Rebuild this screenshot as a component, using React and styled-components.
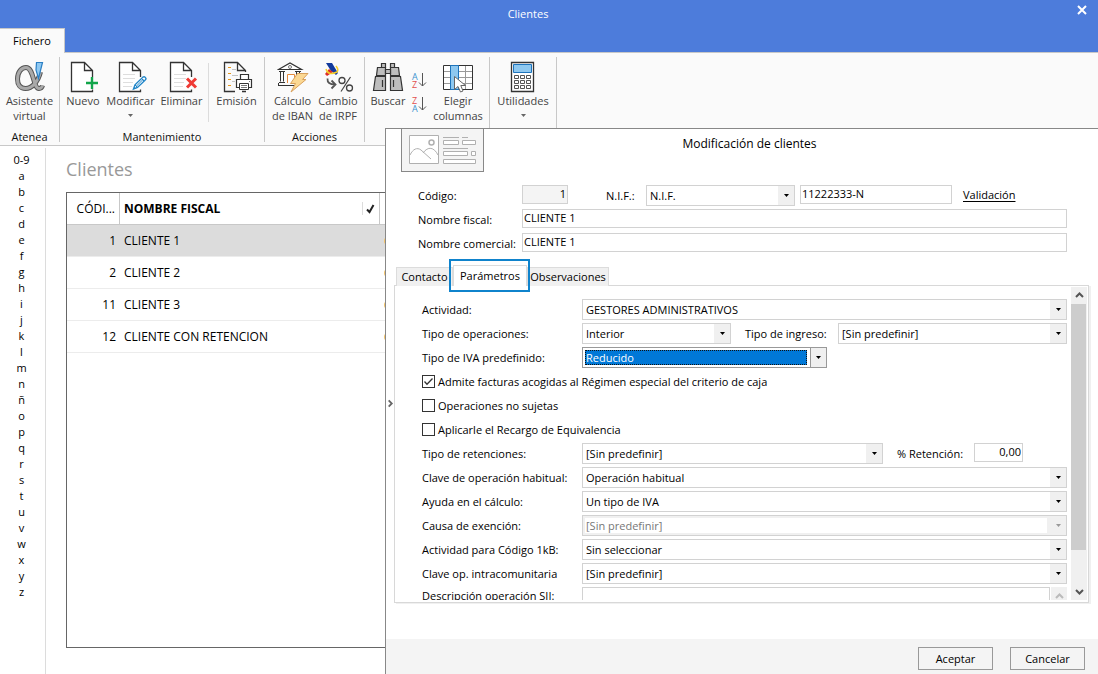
import React, { useState } from "react";
import styled, { createGlobalStyle, css } from "styled-components";

const FONT = '"Open Sans", "Noto Sans", sans-serif';
const LINE = "#c8c8c8";
const FIELD = "#d2d2d2";
const INK = "#333";

const GlobalStyle = createGlobalStyle`
    *, *::before, *::after { box-sizing: border-box; }
    body {
        margin: 0;
        background: #fff;
        color: #000;
        font-family: ${FONT};
        font-size: 11px;
    }
    button, input, select, textarea {
        margin: 0;
        font: inherit;
        color: inherit;
    }
`;

const Window = styled.div`
    position: relative;
    display: flex;
    flex-direction: column;
    height: 100vh;
    overflow: hidden;
`;

const TitleBar = styled.header`
    display: flex;
    flex-direction: column;
    justify-content: space-between;
    height: 52px;
    background: #4d7cdb;
`;

const TitleRow = styled.div`
    display: flex;
    gap: 10px;
    height: 28px;
    color: #fff;
`;

const AppTitle = styled.div`
    flex: 1;
    line-height: 28px;
    text-align: center;
`;

const CloseButton = styled.button`
    display: flex;
    align-items: center;
    justify-content: center;
    width: 32px;
    height: 20px;
    padding: 0;
    border: 0;
    background: none;
`;

const FileTab = styled.button`
    width: 65px;
    height: 25px;
    margin-bottom: -1px;
    padding: 0 0 2px;
    border: solid ${LINE};
    border-width: 1px 1px 0 0;
    background: #fafafa;
    z-index: 1;
`;

const Ribbon = styled.div`
    display: flex;
    height: 94px;
    padding: 4px 0 3px;
    border-top: 1px solid ${LINE};
    border-bottom: 1px solid ${LINE};
    background: #fafafa;
`;

const Group = styled.section`
    display: flex;
    flex-direction: column;
    width: ${({ $width }) => $width}px;
    padding-top: 4px;
    border-right: 1px solid ${LINE};
`;

const GroupTools = styled.div`
    flex: 1;
    display: grid;
    grid-template-columns: ${({ $cols }) => $cols};
    justify-content: center;
`;

const GroupName = styled.h2`
    margin: 0;
    font-size: 11px;
    font-weight: 400;
    line-height: 10px;
    text-align: center;
    color: #111;
`;

const ToolButton = styled.button`
    display: flex;
    flex-direction: column;
    align-items: center;
    padding: 0;
    border: 0;
    background: none;
    line-height: 15px;
    white-space: pre;
    text-align: center;
    color: #444;
`;

const ToolDivider = styled.div`
    height: 59px;
    margin-top: 2px;
    background: #dcdcdc;
`;

const SortStack = styled.div`
    display: flex;
    flex-direction: column;
    gap: 5px;
    padding-top: 10px;
`;

const SortButton = styled.button`
    display: flex;
    padding: 0;
    border: 0;
    background: none;
`;

const Caret = styled.svg`
    margin-top: 6px;
`;

const Body = styled.main`
    flex: 1;
    display: flex;
    min-height: 0;
    padding-top: 2px;
`;

const Alphabet = styled.nav`
    display: flex;
    flex-direction: column;
    width: 46px;
    padding-top: 4px;
    border-right: 1px solid #dcdcdc;
`;

const Letter = styled.button`
    height: 16px;
    padding: 0 2px 0 0;
    border: 0;
    background: none;
    line-height: 16px;
`;

const Listing = styled.section`
    flex: 1;
    display: flex;
    flex-direction: column;
    padding: 8px 20px 26px;
`;

const ListingTitle = styled.h1`
    margin: 0 0 10px;
    font-size: 18px;
    font-weight: 400;
    line-height: 26px;
    color: #999;
`;

const TableFrame = styled.div`
    flex: 1;
    border: 1px solid #666;
`;

const Table = styled.table`
    width: 100%;
    border-collapse: separate;
    border-spacing: 0;
    table-layout: fixed;
    font-size: 12px;

    th, td {
        height: 32px;
        padding: 0 4px;
        text-align: left;
        white-space: nowrap;
        border-bottom: 1px solid #ececec;
    }
    th {
        border-bottom-color: ${LINE};
        border-right: 1px solid ${LINE};
    }
    th:first-child {
        font-weight: 400;
        text-align: right;
    }
    td:first-child {
        text-align: right;
    }
`;

const Row = styled.tr`
    background: ${({ $selected }) => ($selected ? "#dcdcdc" : "#fff")};
`;

const HeadCell = styled.div`
    display: flex;
    align-items: center;
    justify-content: space-between;
`;

const CheckMark = styled.span`
    display: flex;
    padding-left: 3px;
    border-left: 1px solid #dcdcdc;
`;

const Panel = styled.section`
    position: absolute;
    top: 128px;
    left: 385px;
    right: 0;
    bottom: 0;
    display: grid;
    grid-template-columns: 8px minmax(0, 1fr);
    grid-template-rows: minmax(0, 1fr) 35px;
    border: solid #888;
    border-width: 1px 0 0 1px;
    background: #fff;
`;

const Expander = styled.button`
    grid-area: 1 / 1 / 3 / 2;
    display: flex;
    align-items: center;
    justify-content: center;
    padding: 4px 0 0;
    border: 0;
    background: none;
    z-index: 1;
`;

const PanelMain = styled.div`
    grid-area: 1 / 2 / 2 / 3;
    display: flex;
    flex-direction: column;
    min-height: 0;
`;

const PanelHead = styled.div`
    display: grid;
    grid-template-columns: 1fr auto 1fr;
    align-items: start;
    padding-left: 7px;
`;

const CardTile = styled.div`
    width: 83px;
    height: 43px;
    border: 1px solid #888;
    border-top: 0;
    background: #f4f4f4;
`;

const PanelTitle = styled.h2`
    margin: 0;
    font-size: 12px;
    font-weight: 400;
    line-height: 30px;
`;

const Identity = styled.div`
    display: flex;
    flex-direction: column;
    gap: 3px;
    padding: 13px 31px 0 24px;
`;

const Line = styled.div`
    display: flex;
    flex: none;
    align-items: flex-start;
    height: 21px;
`;

const Label = styled.label`
    flex: none;
    width: ${({ $width }) => $width}px;
    padding-left: ${({ $indent = 0 }) => $indent}px;
    line-height: ${({ $line = 22 }) => $line}px;
    white-space: nowrap;
`;

const TextBox = styled.input`
    flex: ${({ $width }) => ($width ? "none" : "1")};
    width: ${({ $width }) => ($width ? `${$width}px` : "auto")};
    min-width: 0;
    height: 19px;
    padding: 0 1px 2px;
    border: 1px solid ${FIELD};
    border-radius: 0;
    background: ${({ readOnly }) => (readOnly ? "#f4f4f4" : "#fff")};
    text-align: ${({ $align }) => $align || "left"};
    outline: 0;
`;

const NumberBox = styled(TextBox)`
    margin-left: 5px;
`;

const CheckLink = styled.a`
    margin-left: 11px;
    color: #000;
    line-height: 20px;
    text-underline-offset: 2px;
`;

const Tabs = styled.div`
    display: flex;
    align-items: flex-end;
    height: 21px;
    margin: 11px 0 0 2px;
`;

const Tab = styled.button`
    position: relative;
    height: ${({ $active }) => ($active ? 21 : 19)}px;
    width: ${({ $width }) => $width}px;
    padding: 0 0 2px;
    border: 1px solid #dcdcdc;
    border-bottom: 0;
    background: ${({ $active }) => ($active ? "#fff" : "#f0f0f0")};
    white-space: nowrap;
    z-index: ${({ $active }) => ($active ? 1 : 0)};

    ${({ $active }) => $active && css`
        &::after {
            content: "";
            position: absolute;
            inset: -7px -4px -6px -5px;
            border: 2px solid #0f83cc;
        }
    `}
`;

const TabPanel = styled.div`
    flex: 1;
    display: flex;
    min-height: 0;
    margin: -1px 9px 36px 0;
    padding: 1px 1px 2px 0;
    border: 1px solid #d8d8d8;
    box-shadow: 2px 1px 0 #f0f0f0;
`;

const Fields = styled.form`
    flex: 1;
    display: flex;
    flex-direction: column;
    gap: 3px;
    min-width: 0;
    overflow: hidden;
    padding: 12px 4px 0 27px;
`;

const SelectBox = styled.span`
    display: grid;
    flex: ${({ $width }) => ($width ? "none" : "1")};
    width: ${({ $width }) => ($width ? `${$width}px` : "auto")};
    min-width: 0;
    height: 21px;
    border: 1px solid ${({ $focus }) => ($focus ? "#999" : FIELD)};
    background: ${({ $disabled }) => ($disabled ? "#f0f0f0" : "#fff")};

    > * { grid-area: 1 / 1; }

    select {
        appearance: none;
        min-width: 0;
        padding: 0 0 0 3px;
        border: 0;
        border-radius: 0;
        background: none;
        outline: 0;
        opacity: 1;
    }
    ${({ $disabled }) => $disabled && css`
        select {
            height: 15px;
            margin: 2px 19px 2px 2px;
            padding-left: 1px;
            background: #fff;
            color: #777;
        }
    `}
    ${({ $focus }) => $focus && css`
        select {
            height: 15px;
            margin: 2px 19px 2px 2px;
            padding-left: 0;
            border: 1px dotted #111;
            background: #0078d7;
            color: #fff;
            line-height: 13px;
        }
    `}
`;

const DropMark = styled.span`
    justify-self: end;
    display: flex;
    align-items: center;
    justify-content: center;
    width: 16px;
    background: #f0f0f0;
    pointer-events: none;
    ${({ $focus }) => $focus && "border-left: 1px solid #999;"}
`;

const CheckRow = styled.label`
    display: flex;
    flex: none;
    align-items: center;
    gap: 3px;
    height: 21px;
`;

const Tick = styled.input`
    appearance: none;
    width: 13px;
    height: 13px;
    border: 1px solid ${INK};
    background: #fff;
    &:checked {
        background: #fff url("data:image/svg+xml,%3Csvg xmlns='http://www.w3.org/2000/svg' viewBox='0 0 11 11'%3E%3Cpath d='M1.5 5.5 4 8.2 9.5 2.5' fill='none' stroke='%23333' stroke-width='1.3'/%3E%3C/svg%3E");
    }
`;

const Notes = styled.textarea`
    flex: 1;
    height: 40px;
    margin-right: 1px;
    padding: 0 2px;
    border: 1px solid ${FIELD};
    border-radius: 0;
    resize: none;
    overflow: hidden;
    outline: 0;
`;

const NotesScroll = styled.span`
    display: flex;
    justify-content: center;
    width: 16px;
    height: 40px;
    padding-top: 5px;
    background: #f0f0f0;
`;

const ScrollBar = styled.div`
    display: flex;
    flex-direction: column;
    width: 16px;
    background: #f0f0f0;
`;

const ScrollArrow = styled.button`
    display: flex;
    align-items: center;
    justify-content: center;
    height: 17px;
    padding: 0;
    border: 0;
    background: none;
`;

const ScrollTrack = styled.div`
    flex: 1;
`;

const ScrollThumb = styled.div`
    width: 15px;
    height: 88%;
    background: #cdcdcd;
`;

const PanelFoot = styled.footer`
    grid-area: 2 / 1 / 3 / 3;
    display: flex;
    justify-content: flex-end;
    gap: 17px;
    padding: 8px 13px 4px;
    background: #f4f4f4;
`;

const FootButton = styled.button`
    width: 75px;
    padding: 0;
    border: 1px solid #999;
    background: #f4f4f4;
`;

const Icon = ({ children, width = 32, height = 32 }) => (
    <svg width={width} height={height} viewBox={`0 0 ${width} ${height}`} fill="none" aria-hidden="true">
        {children}
    </svg>
);

const Page = () => (
    <>
        <path d="M4.5 30.5V1.5H17.5L25.5 9.5V30.5Z" fill="#fff" />
        <path d="M25.5 28.5V30.5H4.5V1.5H17.5L25.5 9.5V16M17.5 1.5V9.5H25.5" stroke={INK} strokeWidth="1.3" />
    </>
);

const PageLines = () => <path d="M8 13.5H20M8 17.5H20M8 21.5H18M8 25.5H17" stroke="#dedede" />;

const ALPHA = "M26.500 11C24 21 18 27.500 11.500 27.500C6 27.500 3.500 23.500 3.500 18C3.500 11 7.500 6.500 12 6.500C20 6.500 19 27.500 25 27.500C27 27.500 28 26.500 28.500 24.500";

const AlphaIcon = () => (
    <Icon>
        <path d={ALPHA} stroke="#555" strokeWidth="5" />
        <path d={ALPHA} stroke="#a9a9a9" strokeWidth="3" />
        <path d="M22.500 1.500H28.500L24.500 17.500L22 9Z" fill="#8fc9f2" stroke="#2b7fc4" strokeWidth="1.200" />
    </Icon>
);

const NewIcon = () => (
    <Icon>
        <Page />
        <path d="M25 16V28M19 22H31" stroke="#12a54a" strokeWidth="2.400" />
    </Icon>
);

const EditIcon = () => (
    <Icon>
        <Page />
        <PageLines />
        <path d="M18.500 28L20 23.800L27.800 16.200Q29.800 15 31 17.500Q31 18.500 30 19.200L22.500 26.500Z" fill="#fff" stroke="#2286c8" strokeWidth="1.400" />
        <path d="M20 24L22.500 26.500M26.500 17.500L29 20M21.500 25L28.500 18" stroke="#2286c8" />
    </Icon>
);

const DeleteIcon = () => (
    <Icon>
        <Page />
        <PageLines />
        <path d="M21 17.500L30 26.500M30 17.500L21 26.500" stroke="#ef3a34" strokeWidth="3" />
    </Icon>
);

const PrintIcon = () => (
    <Icon>
        <path d="M14 30.500H3.500V1.500H16.500L24.500 9.500V11M16.500 1.500V9.500H24.500M21 30.500H25" stroke={INK} strokeWidth="1.300" />
        <path d="M7 6.500H10M7 12.500H10M7 18.500H10M7 24.500H10" stroke="#e8991c" />
        <path d="M11 8.500H15M11 14.500H17M11 20.500H14" stroke="#c4c4c4" />
        <path d="M19.500 18.500V13.500H27.500V18.500M18 26.500H15.500V18.500H30.500V26.500H28" fill="#fff" stroke={INK} strokeWidth="1.200" />
        <path d="M18.500 22.500H27.500V28.500H18.500Z" fill="#fff" stroke={INK} />
        <path d="M20 24.500H26M20 26.500H26M28 20.500H29" stroke="#777" />
    </Icon>
);

const BankIcon = () => (
    <Icon>
        <path d="M1.500 8.500L13 2L24.500 8.500Z" fill="#fff" stroke={INK} strokeWidth="1.200" />
        <circle cx="13" cy="6" r="1.500" stroke="#777" />
        <path d="M2 10.500H8M3.500 10.500V20.500M6.500 10.500V20.500M18 10.500H24M19.500 10.500V14M22.500 10.500V13M2 21.500H8M1 24.500H18M1.500 22V24" stroke={INK} />
        <path d="M10.500 22V13.500H17.500V22" fill="#fff" stroke="#e58a3c" />
        <path d="M20.500 12.500H31L25.500 18.500H29L14 31L18.500 22.500H13.500Z" fill="#fbd893" stroke="#d9a15c" />
    </Icon>
);

const TaxIcon = () => (
    <Icon>
        <path d="M4 2H10L16 12L14 14L9 10Z" fill="#123a9c" />
        <path d="M7 8L11 11L5 15L3 13Z" fill="#dd2a2a" />
        <path d="M4 8Q6 15 15 11Q17 9 14 5" stroke="#f7cf2a" strokeWidth="1.500" />
        <path d="M5.500 17.500Q5 23.500 13 23.500M9.500 19.500L13.500 23.500L9.500 27.500" stroke="#555" strokeWidth="1.800" />
        <path d="M28.500 16L19 30.500" stroke="#444" strokeWidth="1.200" />
        <circle cx="20" cy="19.500" r="3" stroke="#444" strokeWidth="1.300" />
        <circle cx="27.500" cy="27" r="3" stroke="#444" strokeWidth="1.300" />
    </Icon>
);

const SearchIcon = () => (
    <Icon>
        <g fill="#bdbdbd" stroke={INK} strokeWidth="1.200">
            <path d="M9.500 2.500H13.500V6.500H9.500ZM18.500 2.500H22.500V6.500H18.500Z" />
            <path d="M5.500 6.500H13.500V14.500H4.500ZM18.500 6.500H26.500L27.500 14.500H18.500Z" />
            <path d="M13.500 8.500H18.500V12.500H13.500Z" />
            <path d="M3.500 15.500H13.500V29.500H1.500ZM18.500 15.500H28.500L30.500 29.500H18.500Z" />
            <path d="M10.500 19V26M21.500 19V26" />
        </g>
    </Icon>
);

const ColumnsIcon = () => (
    <Icon>
        <path d="M1.500 4.500H30.500V28.500H1.500Z" fill="#fff" stroke={INK} />
        <path d="M2 10.500H30M2 16.500H30M2 22.500H30M23.500 5V28" stroke="#999" />
        <path d="M8.500 4.500H16.500V28.500H8.500Z" fill="#8ec8f0" stroke="#1d74bd" />
        <path d="M12.500 15.500V28.500L16 25.500L18.500 31L21 30L18.800 24.500H23.500Z" fill="#fff" stroke="#666" />
    </Icon>
);

const CalcIcon = () => (
    <Icon>
        <path d="M4.500 1.500H26.500V30.500H4.500Z" fill="#fff" stroke={INK} strokeWidth="1.300" />
        <path d="M6.500 3.500H24.500V11.500H6.500Z" fill="#8ec8f0" stroke="#1d74bd" />
        {[14.5, 19.5, 24.5].map((y) => (
            <path key={y} d={`M7.500 ${y}h4v3h-4zM13.500 ${y}h4v3h-4zM19.500 ${y}h4v3h-4z`} stroke="#555" />
        ))}
    </Icon>
);

const SortIcon = ({ top, bottom }) => (
    <Icon width={16} height={19}>
        <text x="1" y="9" fontSize="9" fill={top === "A" ? "#3c93cf" : "#e2504e"}>{top}</text>
        <text x="1" y="17" fontSize="9" fill={top === "A" ? "#e2504e" : "#3c93cf"}>{bottom}</text>
        <path d="M11.500 2V15M8 11.500L11.500 15L15 11.500" stroke="#555" />
    </Icon>
);

const Chevron = ({ dir, color = "#555" }) => {
    const paths = { up: "M1 6L4.500 2.500L8 6", down: "M1 3L4.500 6.500L8 3", right: "M3 1L6.500 4.500L3 8" };
    return (
        <Icon width={9} height={9}>
            <path d={paths[dir]} stroke={color} strokeWidth="2" />
        </Icon>
    );
};

const SmallCaret = ({ color = "#000" }) => (
    <svg width="5" height="3" viewBox="0 0 5 3" aria-hidden="true"><path d="M0 0H5L2.500 3Z" fill={color} /></svg>
);

const Tool = ({ icon, text, menu }) => (
    <ToolButton type="button">
        {icon}
        {text}
        {menu && <Caret width="5" height="3" viewBox="0 0 5 3"><path d="M0 0H5L2.500 3Z" fill="#666" /></Caret>}
    </ToolButton>
);

const Select = ({ id, value, width, focus, disabled }) => (
    <SelectBox $width={width} $focus={focus} $disabled={disabled}>
        <select id={id} defaultValue={value} disabled={disabled}>
            <option>{value}</option>
        </select>
        <DropMark $focus={focus}><SmallCaret color={disabled ? "#999" : "#000"} /></DropMark>
    </SelectBox>
);

const SelectLine = ({ id, label, ...rest }) => (
    <Line>
        <Label htmlFor={id} $width={160}>{label}</Label>
        <Select id={id} {...rest} />
    </Line>
);

const letters = ["0-9", ..."abcdefghijklmnñopqrstuvwxyz"];

const clients = [
    { code: 1, name: "CLIENTE 1" },
    { code: 2, name: "CLIENTE 2" },
    { code: 11, name: "CLIENTE 3" },
    { code: 12, name: "CLIENTE CON RETENCION" },
];

const tabs = [
    { name: "Contacto", width: 57 },
    { name: "Parámetros", width: 74 },
    { name: "Observaciones", width: 82 },
];

const App = () => {
    const [selected, setSelected] = useState(1);
    const [tab, setTab] = useState("Parámetros");

    return (
        <Window>
            <GlobalStyle />
            <TitleBar>
                <TitleRow>
                    <AppTitle>Clientes</AppTitle>
                    <CloseButton type="button" aria-label="Cerrar">
                        <Icon width={10} height={10}><path d="M1 1L9 9M9 1L1 9" stroke="#fff" strokeWidth="2" /></Icon>
                    </CloseButton>
                </TitleRow>
                <FileTab type="button">Fichero</FileTab>
            </TitleBar>

            <Ribbon>
                <Group $width={60}>
                    <GroupTools $cols="56px"><Tool icon={<AlphaIcon />} text={"Asistente\nvirtual"} /></GroupTools>
                    <GroupName>Atenea</GroupName>
                </Group>
                <Group $width={205}>
                    <GroupTools $cols="46px 49px 53px 1px 55px">
                        <Tool icon={<NewIcon />} text="Nuevo" />
                        <Tool icon={<EditIcon />} text="Modificar" menu />
                        <Tool icon={<DeleteIcon />} text="Eliminar" />
                        <ToolDivider />
                        <Tool icon={<PrintIcon />} text="Emisión" />
                    </GroupTools>
                    <GroupName>Mantenimiento</GroupName>
                </Group>
                <Group $width={100}>
                    <GroupTools $cols="47px 44px">
                        <Tool icon={<BankIcon />} text={"Cálculo\nde IBAN"} />
                        <Tool icon={<TaxIcon />} text={"Cambio\nde IRPF"} />
                    </GroupTools>
                    <GroupName>Acciones</GroupName>
                </Group>
                <Group $width={125}>
                    <GroupTools $cols="46px 16px 62px">
                        <Tool icon={<SearchIcon />} text="Buscar" />
                        <SortStack>
                            <SortButton type="button" aria-label="Orden ascendente"><SortIcon top="A" bottom="Z" /></SortButton>
                            <SortButton type="button" aria-label="Orden descendente"><SortIcon top="Z" bottom="A" /></SortButton>
                        </SortStack>
                        <Tool icon={<ColumnsIcon />} text={"Elegir\ncolumnas"} />
                    </GroupTools>
                </Group>
                <Group $width={67}>
                    <GroupTools $cols="66px"><Tool icon={<CalcIcon />} text="Utilidades" menu /></GroupTools>
                </Group>
            </Ribbon>

            <Body>
                <Alphabet>
                    {letters.map((l) => <Letter key={l} type="button">{l}</Letter>)}
                </Alphabet>
                <Listing>
                    <ListingTitle>Clientes</ListingTitle>
                    <TableFrame>
                        <Table>
                            <colgroup>
                                <col width="53" />
                                <col width="260" />
                                <col />
                            </colgroup>
                            <thead>
                                <tr>
                                    <th>CÓDI...</th>
                                    <th>
                                        <HeadCell>
                                            NOMBRE FISCAL
                                            <CheckMark>
                                                <Icon width={9} height={13}><path d="M1 7.500L3.500 10L7.500 3" stroke="#222" strokeWidth="2" /></Icon>
                                            </CheckMark>
                                        </HeadCell>
                                    </th>
                                    <th />
                                </tr>
                            </thead>
                            <tbody>
                                {clients.map(({ code, name }) => (
                                    <Row key={code} $selected={code === selected} onClick={() => setSelected(code)}>
                                        <td>{code}</td>
                                        <td>{name}</td>
                                        <td><Icon width={8} height={8}><circle cx="4" cy="4" r="4" fill="#f5c469" /></Icon></td>
                                    </Row>
                                ))}
                            </tbody>
                        </Table>
                    </TableFrame>
                </Listing>
            </Body>

            <Panel>
                <Expander type="button" aria-label="Expandir"><Chevron dir="right" color="#666" /></Expander>
                <PanelMain>
                    <PanelHead>
                        <CardTile>
                            <Icon width={81} height={42}>
                                <g stroke="#b0b0b0">
                                    <path d="M7.500 6.500H36.500V34.500H7.500Z" fill="#fff" />
                                    <circle cx="29.500" cy="13.500" r="2.500" strokeWidth="1.500" />
                                    <path d="M8 26C11 20 15 18 19 21L29 30M21 24C26 17 32 18 36 26" />
                                    <path d="M41 8.500H57M60 8.500H66M41 19.500H66" />
                                    <path d="M41.500 11.500H56.500V15.500H41.500ZM60.500 11.500H73.500V15.500H60.500ZM41.500 22.500H65.500V26.500H41.500ZM69.500 22.500H73.500V26.500H69.500ZM41.500 30.500H73.500V34.500H41.500Z" fill="#fff" />
                                </g>
                            </Icon>
                        </CardTile>
                        <PanelTitle>Modificación de clientes</PanelTitle>
                    </PanelHead>

                    <Identity>
                        <Line>
                            <Label htmlFor="codigo" $width={104}>Código:</Label>
                            <TextBox id="codigo" defaultValue="1" readOnly $width={46} $align="right" />
                            <Label htmlFor="nif-tipo" $width={78} $indent={38}>N.I.F.:</Label>
                            <Select id="nif-tipo" value="N.I.F." width={149} />
                            <NumberBox aria-label="Número de N.I.F." defaultValue="11222333-N" $width={152} />
                            <CheckLink href="#validacion">Validación</CheckLink>
                        </Line>
                        <Line>
                            <Label htmlFor="fiscal" $width={104}>Nombre fiscal:</Label>
                            <TextBox id="fiscal" defaultValue="CLIENTE 1" />
                        </Line>
                        <Line>
                            <Label htmlFor="comercial" $width={104}>Nombre comercial:</Label>
                            <TextBox id="comercial" defaultValue="CLIENTE 1" />
                        </Line>
                    </Identity>

                    <Tabs role="tablist">
                        {tabs.map(({ name, width }) => (
                            <Tab key={name} type="button" role="tab" aria-selected={tab === name} $active={tab === name} $width={width} onClick={() => setTab(name)}>
                                {name}
                            </Tab>
                        ))}
                    </Tabs>

                    <TabPanel>
                        <Fields>
                            <SelectLine id="actividad" label="Actividad:" value="GESTORES ADMINISTRATIVOS" />
                            <Line>
                                <Label htmlFor="operaciones" $width={160}>Tipo de operaciones:</Label>
                                <Select id="operaciones" value="Interior" width={149} />
                                <Label htmlFor="ingreso" $width={107} $indent={14}>Tipo de ingreso:</Label>
                                <Select id="ingreso" value="[Sin predefinir]" />
                            </Line>
                            <SelectLine id="iva" label="Tipo de IVA predefinido:" value="Reducido" width={245} focus />
                            <CheckRow><Tick type="checkbox" defaultChecked />Admite facturas acogidas al Régimen especial del criterio de caja</CheckRow>
                            <CheckRow><Tick type="checkbox" />Operaciones no sujetas</CheckRow>
                            <CheckRow><Tick type="checkbox" />Aplicarle el Recargo de Equivalencia</CheckRow>
                            <Line>
                                <Label htmlFor="retenciones" $width={160}>Tipo de retenciones:</Label>
                                <Select id="retenciones" value="[Sin predefinir]" width={301} />
                                <Label htmlFor="porcentaje" $width={91} $indent={14}>% Retención:</Label>
                                <TextBox id="porcentaje" defaultValue="0,00" $width={49} $align="right" />
                            </Line>
                            <SelectLine id="clave" label="Clave de operación habitual:" value="Operación habitual" />
                            <SelectLine id="ayuda" label="Ayuda en el cálculo:" value="Un tipo de IVA" />
                            <SelectLine id="causa" label="Causa de exención:" value="[Sin predefinir]" disabled />
                            <SelectLine id="codigo1kb" label="Actividad para Código 1kB:" value="Sin seleccionar" />
                            <SelectLine id="intra" label="Clave op. intracomunitaria" value="[Sin predefinir]" />
                            <Line>
                                <Label htmlFor="sii" $width={160} $line={18}>Descripción operación SII:</Label>
                                <Notes id="sii" />
                                <NotesScroll><Chevron dir="up" color="#bbb" /></NotesScroll>
                            </Line>
                        </Fields>
                        <ScrollBar>
                            <ScrollArrow type="button" aria-label="Subir"><Chevron dir="up" /></ScrollArrow>
                            <ScrollTrack><ScrollThumb /></ScrollTrack>
                            <ScrollArrow type="button" aria-label="Bajar"><Chevron dir="down" /></ScrollArrow>
                        </ScrollBar>
                    </TabPanel>
                </PanelMain>
                <PanelFoot>
                    <FootButton type="button">Aceptar</FootButton>
                    <FootButton type="button">Cancelar</FootButton>
                </PanelFoot>
            </Panel>
        </Window>
    );
};

export default App;
